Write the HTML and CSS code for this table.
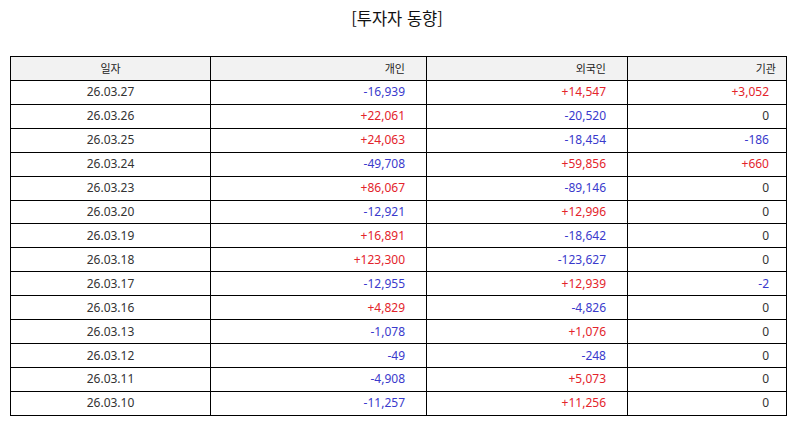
FILE: index.html
```html
<!DOCTYPE html>
<html lang="ko">
<head>
<meta charset="utf-8">
<title>투자자 동향</title>
<link rel="stylesheet" href="styles.css">
</head>
<body>
<div class="page">
  <h1 class="title">[투자자 동향]</h1>
  <table class="flow">
    <colgroup>
      <col class="c-date">
      <col class="c-ind">
      <col class="c-for">
      <col class="c-inst">
    </colgroup>
    <thead>
      <tr>
        <th class="date">일자</th>
        <th class="num">개인</th>
        <th class="num">외국인</th>
        <th class="num last">기관</th>
      </tr>
    </thead>
    <tbody>
      <tr><td class="date">26.03.27</td><td class="num dn">-16,939</td><td class="num up">+14,547</td><td class="num last up">+3,052</td></tr>
      <tr><td class="date">26.03.26</td><td class="num up">+22,061</td><td class="num dn">-20,520</td><td class="num last">0</td></tr>
      <tr><td class="date">26.03.25</td><td class="num up">+24,063</td><td class="num dn">-18,454</td><td class="num last dn">-186</td></tr>
      <tr><td class="date">26.03.24</td><td class="num dn">-49,708</td><td class="num up">+59,856</td><td class="num last up">+660</td></tr>
      <tr><td class="date">26.03.23</td><td class="num up">+86,067</td><td class="num dn">-89,146</td><td class="num last">0</td></tr>
      <tr><td class="date">26.03.20</td><td class="num dn">-12,921</td><td class="num up">+12,996</td><td class="num last">0</td></tr>
      <tr><td class="date">26.03.19</td><td class="num up">+16,891</td><td class="num dn">-18,642</td><td class="num last">0</td></tr>
      <tr><td class="date">26.03.18</td><td class="num up">+123,300</td><td class="num dn">-123,627</td><td class="num last">0</td></tr>
      <tr><td class="date">26.03.17</td><td class="num dn">-12,955</td><td class="num up">+12,939</td><td class="num last dn">-2</td></tr>
      <tr><td class="date">26.03.16</td><td class="num up">+4,829</td><td class="num dn">-4,826</td><td class="num last">0</td></tr>
      <tr><td class="date">26.03.13</td><td class="num dn">-1,078</td><td class="num up">+1,076</td><td class="num last">0</td></tr>
      <tr><td class="date">26.03.12</td><td class="num dn">-49</td><td class="num dn">-248</td><td class="num last">0</td></tr>
      <tr><td class="date">26.03.11</td><td class="num dn">-4,908</td><td class="num up">+5,073</td><td class="num last">0</td></tr>
      <tr><td class="date">26.03.10</td><td class="num dn">-11,257</td><td class="num up">+11,256</td><td class="num last">0</td></tr>
    </tbody>
  </table>
</div>
</body>
</html>
```

FILE: styles.css
```css
html, body {
  margin: 0;
  padding: 0;
  background: #ffffff;
}

body {
  font-family: "Noto Sans", "Noto Sans CJK KR", sans-serif;
  color: #333333;
}

.page {
  width: 794px;
  height: 425px;
  padding: 0 0 0 10px;
  box-sizing: border-box;
}

.title {
  margin: 0 0 0 -10px;
  height: 56px;
  padding-top: 6px;
  box-sizing: border-box;
  font-family: "Noto Sans CJK KR", sans-serif;
  font-size: 16.5px;
  font-weight: 400;
  line-height: 24px;
  text-align: center;
  color: #111111;
}

.flow {
  border-collapse: collapse;
  width: 776px;
  table-layout: fixed;
  font-size: 12px;
}

.c-date { width: 200px; }
.c-ind { width: 216px; }
.c-for { width: 201px; }
.c-inst { width: 159px; }

.flow th,
.flow td {
  border: 1px solid #000000;
  height: 22.93px;
  padding: 0;
  line-height: 14px;
  font-weight: 400;
  white-space: nowrap;
}

.flow thead th {
  background: #f2f2f2;
  font-family: "Noto Sans CJK KR", sans-serif;
  font-size: 11px;
  color: #222222;
}

.date {
  text-align: center;
}

.num {
  text-align: right;
  padding-right: 21px !important;
}

.flow .last {
  padding-right: 17px !important;
}

.flow thead .last {
  padding-right: 10px !important;
}

.up { color: #e3242b; }
.dn { color: #3a3acc; }
```
